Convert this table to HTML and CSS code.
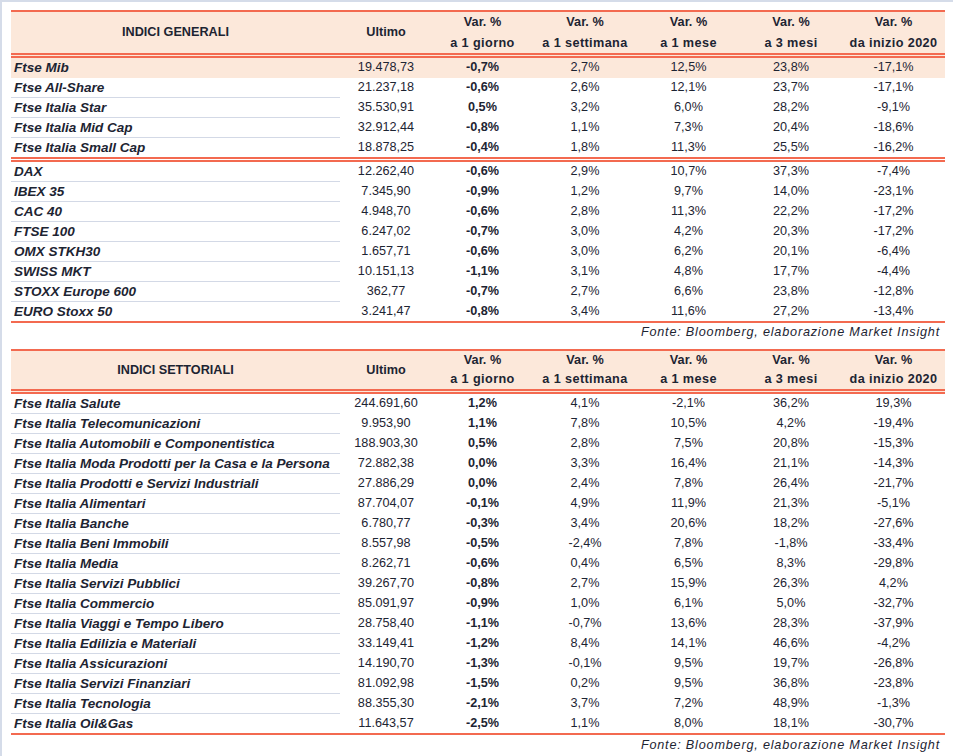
FILE: index.html
```html
<!DOCTYPE html>
<html lang="it">
<head>
<meta charset="utf-8">
<title>Indici</title>
<link rel="stylesheet" href="styles.css">
</head>
<body>
<div class="sheet">
  <table class="grid g1">
    <colgroup>
      <col class="c-name"><col class="c-ult"><col class="c-gio"><col class="c-set"><col class="c-mes"><col class="c-3m"><col class="c-ini">
    </colgroup>
    <thead>
      <tr>
        <th class="h-name">INDICI GENERALI</th>
        <th>Ultimo</th>
        <th>Var. %<br><span class="sub">a 1 giorno</span></th>
        <th>Var. %<br><span class="sub">a 1 settimana</span></th>
        <th>Var. %<br><span class="sub">a 1 mese</span></th>
        <th>Var. %<br><span class="sub">a 3 mesi</span></th>
        <th>Var. %<br><span class="sub">da inizio 2020</span></th>
      </tr>
    </thead>
    <tbody>
      <tr class="hl"><td class="name">Ftse Mib</td><td>19.478,73</td><td class="b">-0,7%</td><td>2,7%</td><td>12,5%</td><td>23,8%</td><td>-17,1%</td></tr>
      <tr><td class="name">Ftse All-Share</td><td>21.237,18</td><td class="b">-0,6%</td><td>2,6%</td><td>12,1%</td><td>23,7%</td><td>-17,1%</td></tr>
      <tr><td class="name">Ftse Italia Star</td><td>35.530,91</td><td class="b">0,5%</td><td>3,2%</td><td>6,0%</td><td>28,2%</td><td>-9,1%</td></tr>
      <tr><td class="name">Ftse Italia Mid Cap</td><td>32.912,44</td><td class="b">-0,8%</td><td>1,1%</td><td>7,3%</td><td>20,4%</td><td>-18,6%</td></tr>
      <tr class="grp"><td class="name">Ftse Italia Small Cap</td><td>18.878,25</td><td class="b">-0,4%</td><td>1,8%</td><td>11,3%</td><td>25,5%</td><td>-16,2%</td></tr>
      <tr><td class="name">DAX</td><td>12.262,40</td><td class="b">-0,6%</td><td>2,9%</td><td>10,7%</td><td>37,3%</td><td>-7,4%</td></tr>
      <tr><td class="name">IBEX 35</td><td>7.345,90</td><td class="b">-0,9%</td><td>1,2%</td><td>9,7%</td><td>14,0%</td><td>-23,1%</td></tr>
      <tr><td class="name">CAC 40</td><td>4.948,70</td><td class="b">-0,6%</td><td>2,8%</td><td>11,3%</td><td>22,2%</td><td>-17,2%</td></tr>
      <tr><td class="name">FTSE 100</td><td>6.247,02</td><td class="b">-0,7%</td><td>3,0%</td><td>4,2%</td><td>20,3%</td><td>-17,2%</td></tr>
      <tr><td class="name">OMX STKH30</td><td>1.657,71</td><td class="b">-0,6%</td><td>3,0%</td><td>6,2%</td><td>20,1%</td><td>-6,4%</td></tr>
      <tr><td class="name">SWISS MKT</td><td>10.151,13</td><td class="b">-1,1%</td><td>3,1%</td><td>4,8%</td><td>17,7%</td><td>-4,4%</td></tr>
      <tr><td class="name">STOXX Europe 600</td><td>362,77</td><td class="b">-0,7%</td><td>2,7%</td><td>6,6%</td><td>23,8%</td><td>-12,8%</td></tr>
      <tr class="last"><td class="name">EURO Stoxx 50</td><td>3.241,47</td><td class="b">-0,8%</td><td>3,4%</td><td>11,6%</td><td>27,2%</td><td>-13,4%</td></tr>
    </tbody>
  </table>
  <div class="source s1">Fonte: Bloomberg, elaborazione Market Insight</div>

  <table class="grid g2">
    <colgroup>
      <col class="c-name"><col class="c-ult"><col class="c-gio"><col class="c-set"><col class="c-mes"><col class="c-3m"><col class="c-ini">
    </colgroup>
    <thead>
      <tr>
        <th class="h-name">INDICI SETTORIALI</th>
        <th>Ultimo</th>
        <th>Var. %<br><span class="sub">a 1 giorno</span></th>
        <th>Var. %<br><span class="sub">a 1 settimana</span></th>
        <th>Var. %<br><span class="sub">a 1 mese</span></th>
        <th>Var. %<br><span class="sub">a 3 mesi</span></th>
        <th>Var. %<br><span class="sub">da inizio 2020</span></th>
      </tr>
    </thead>
    <tbody>
      <tr><td class="name">Ftse Italia Salute</td><td>244.691,60</td><td class="b">1,2%</td><td>4,1%</td><td>-2,1%</td><td>36,2%</td><td>19,3%</td></tr>
      <tr><td class="name">Ftse Italia Telecomunicazioni</td><td>9.953,90</td><td class="b">1,1%</td><td>7,8%</td><td>10,5%</td><td>4,2%</td><td>-19,4%</td></tr>
      <tr><td class="name">Ftse Italia Automobili e Componentistica</td><td>188.903,30</td><td class="b">0,5%</td><td>2,8%</td><td>7,5%</td><td>20,8%</td><td>-15,3%</td></tr>
      <tr><td class="name">Ftse Italia Moda Prodotti per la Casa e la Persona</td><td>72.882,38</td><td class="b">0,0%</td><td>3,3%</td><td>16,4%</td><td>21,1%</td><td>-14,3%</td></tr>
      <tr><td class="name">Ftse Italia Prodotti e Servizi Industriali</td><td>27.886,29</td><td class="b">0,0%</td><td>2,4%</td><td>7,8%</td><td>26,4%</td><td>-21,7%</td></tr>
      <tr><td class="name">Ftse Italia Alimentari</td><td>87.704,07</td><td class="b">-0,1%</td><td>4,9%</td><td>11,9%</td><td>21,3%</td><td>-5,1%</td></tr>
      <tr><td class="name">Ftse Italia Banche</td><td>6.780,77</td><td class="b">-0,3%</td><td>3,4%</td><td>20,6%</td><td>18,2%</td><td>-27,6%</td></tr>
      <tr><td class="name">Ftse Italia Beni Immobili</td><td>8.557,98</td><td class="b">-0,5%</td><td>-2,4%</td><td>7,8%</td><td>-1,8%</td><td>-33,4%</td></tr>
      <tr><td class="name">Ftse Italia Media</td><td>8.262,71</td><td class="b">-0,6%</td><td>0,4%</td><td>6,5%</td><td>8,3%</td><td>-29,8%</td></tr>
      <tr><td class="name">Ftse Italia Servizi Pubblici</td><td>39.267,70</td><td class="b">-0,8%</td><td>2,7%</td><td>15,9%</td><td>26,3%</td><td>4,2%</td></tr>
      <tr><td class="name">Ftse Italia Commercio</td><td>85.091,97</td><td class="b">-0,9%</td><td>1,0%</td><td>6,1%</td><td>5,0%</td><td>-32,7%</td></tr>
      <tr><td class="name">Ftse Italia Viaggi e Tempo Libero</td><td>28.758,40</td><td class="b">-1,1%</td><td>-0,7%</td><td>13,6%</td><td>28,3%</td><td>-37,9%</td></tr>
      <tr><td class="name">Ftse Italia Edilizia e Materiali</td><td>33.149,41</td><td class="b">-1,2%</td><td>8,4%</td><td>14,1%</td><td>46,6%</td><td>-4,2%</td></tr>
      <tr><td class="name">Ftse Italia Assicurazioni</td><td>14.190,70</td><td class="b">-1,3%</td><td>-0,1%</td><td>9,5%</td><td>19,7%</td><td>-26,8%</td></tr>
      <tr><td class="name">Ftse Italia Servizi Finanziari</td><td>81.092,98</td><td class="b">-1,5%</td><td>0,2%</td><td>9,5%</td><td>36,8%</td><td>-23,8%</td></tr>
      <tr><td class="name">Ftse Italia Tecnologia</td><td>88.355,30</td><td class="b">-2,1%</td><td>3,7%</td><td>7,2%</td><td>48,9%</td><td>-1,3%</td></tr>
      <tr class="last"><td class="name">Ftse Italia Oil&amp;Gas</td><td>11.643,57</td><td class="b">-2,5%</td><td>1,1%</td><td>8,0%</td><td>18,1%</td><td>-30,7%</td></tr>
    </tbody>
  </table>
  <div class="source s2">Fonte: Bloomberg, elaborazione Market Insight</div>
</div>
</body>
</html>
```

FILE: styles.css
```css
html, body {
  margin: 0;
  padding: 0;
  background: #ffffff;
}

body {
  border-top: 2px solid #d5dce9;
  border-left: 2px solid #d5dce9;
  min-height: 754px;
  box-sizing: border-box;
  font-family: "Liberation Sans", Arial, sans-serif;
  font-size: 12.67px;
  color: #1d2432;
}

.sheet {
  padding: 8px 0 0 9px;
  width: 934px;
}

.grid {
  border-collapse: separate;
  border-spacing: 0;
  table-layout: fixed;
  width: 934px;
}

.c-name { width: 329px; }
.c-ult { width: 92px; }
.c-gio { width: 101px; }
.c-set { width: 104px; }
.c-mes { width: 103px; }
.c-3m { width: 102px; }
.c-ini { width: 103px; }

.grid th {
  background: #fce8da;
  border-top: 2px solid #f36a50;
  border-bottom: 5px double #f36a50;
  font-weight: bold;
  text-align: center;
  padding: 0;
  white-space: nowrap;
}

.grid th .sub {
  letter-spacing: 0.4px;
}

.g1 th {
  line-height: 20.5px;
  height: 41px;
}

.g2 th {
  line-height: 19px;
  height: 38px;
}

.grid td {
  padding: 0;
  height: 19px;
  line-height: 19px;
  text-align: center;
  border-bottom: 1px solid transparent;
  white-space: nowrap;
}

.grid td.name {
  text-align: left;
  padding-left: 3px;
  font-weight: bold;
  font-style: italic;
  font-size: 13.5px;
  border-bottom-color: #d3d9e6;
}

.grid td.b {
  font-weight: bold;
}

.grid tr.hl td {
  background: #fce8da;
  border-bottom-color: transparent;
}

.grid tr.grp td {
  border-bottom: 5px double #f36a50;
}

.grid tr.last td {
  border-bottom: 2px solid #f36a50;
}

.source {
  text-align: right;
  font-style: italic;
  padding-right: 5px;
  line-height: 19px;
  letter-spacing: 0.8px;
}

.s1 {
  height: 26px;
}

.s2 {
  line-height: 21px;
}
```
